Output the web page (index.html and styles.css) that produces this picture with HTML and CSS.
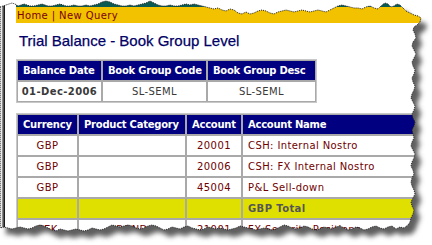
FILE: index.html
```
<!DOCTYPE html>
<html>
<head>
<meta charset="utf-8">
<link rel="stylesheet" href="styles.css">
</head>
<body>
<div class="page">
  <div class="edge"></div>
  <div class="sheet">
    <div class="topstrip"></div>
    <nav class="navbar"><span>Home</span> | <span>New Query</span></nav>
    <h1 class="title">Trial Balance - Book Group Level</h1>
    <table class="grid info">
      <tr><th class="w-date">Balance Date</th><th class="w-code">Book Group Code</th><th class="w-desc">Book Group Desc</th></tr>
      <tr class="plain"><td class="center bold">01-Dec-2006</td><td class="center">SL-SEML</td><td class="center">SL-SEML</td></tr>
    </table>
    <table class="grid accounts">
      <tr><th class="w-cur">Currency</th><th class="w-cat">Product Category</th><th class="w-acc">Account</th><th class="w-name">Account Name</th></tr>
      <tr><td class="center">GBP</td><td></td><td class="center">20001</td><td>CSH: Internal Nostro</td></tr>
      <tr><td class="center">GBP</td><td></td><td class="center">20006</td><td>CSH: FX Internal Nostro</td></tr>
      <tr><td class="center">GBP</td><td></td><td class="center">45004</td><td>P&amp;L Sell-down</td></tr>
      <tr class="total"><td></td><td></td><td></td><td class="bold">GBP Total</td></tr>
      <tr><td class="center">SEK</td><td class="center">BOND</td><td class="center">21001</td><td>FX Security Positions</td></tr>
    </table>
  </div>
  <svg class="tear" width="432" height="245" viewBox="0 0 432 245">
    <defs>
      <path id="paper" d="M0,7 L3,6 L6,5 L9,4 L12,3 L15,4 L18,6 L21,5 L24,4 L27,5 L30,6 L34,6 L38,5 L42,4 L45,5 L48,6 L52,6 L56,5 L60,4 L63,5 L66,6 L70,6 L74,5 L78,6 L82,6 L86,5 L90,6 L94,5 L98,4 L102,2 L106,1 L110,2 L114,4 L118,5 L122,6 L126,6 L130,5 L134,6 L138,5 L142,4 L146,3 L150,1 L154,3 L158,5 L162,6 L166,6 L170,5 L174,6 L178,6 L182,5 L186,4 L190,5 L194,4 L198,5 L202,6 L206,7 L210,8 L214,9 L218,8 L222,10 L226,11 L230,9 L234,10 L238,13 L242,14 L246,12 L250,14 L254,13 L258,11 L262,10 L266,11 L270,13 L274,14 L278,12 L282,11 L286,10 L290,11 L294,12 L298,11 L302,10 L306,11 L310,12 L314,11 L318,10 L322,11 L326,12 L330,10 L334,8 L338,6 L342,5 L346,6 L350,7 L354,8 L358,8 L362,9 L366,7 L370,6 L374,8 L378,9 L382,5 L385,3 L388,4 L391,7 L394,6 L397,4 L400,5 L403,8 L406,11 L410,13 L414,15 L418,16 L421,18 L420,22 L417,25 L414,27 L413,30 L415,34 L416,38 L413,42 L412,46 L414,50 L416,54 L414,58 L412,62 L413,66 L415,70 L414,74 L412,78 L413,82 L415,86 L414,90 L412,94 L411,98 L413,102 L415,106 L414,110 L412,114 L413,118 L415,122 L414,126 L412,130 L413,134 L414,138 L412,142 L411,146 L413,150 L415,154 L414,158 L412,162 L411,166 L413,170 L414,174 L412,178 L411,182 L412,186 L414,190 L415,194 L413,198 L411,202 L412,206 L414,210 L413,214 L411,218 L410,222 L408,225 L404,228 L400,227 L396,229 L392,226 L388,227 L384,229 L380,228 L376,226 L372,227 L368,229 L364,230 L360,228 L356,227 L352,229 L348,230 L344,228 L340,226 L336,227 L332,229 L328,228 L324,227 L320,229 L316,230 L312,229 L308,227 L304,226 L300,228 L296,229 L292,228 L288,226 L284,225 L280,227 L276,229 L272,230 L268,229 L264,228 L260,229 L256,230 L252,229 L248,228 L244,227 L240,226 L236,228 L232,229 L228,230 L224,229 L220,228 L216,229 L212,228 L208,227 L204,229 L200,230 L196,229 L192,228 L188,226 L184,227 L180,229 L176,228 L172,227 L168,229 L164,230 L160,228 L156,226 L152,225 L148,226 L144,228 L140,229 L136,228 L132,226 L128,225 L124,226 L120,227 L116,226 L112,225 L108,227 L104,229 L100,230 L96,229 L92,228 L88,230 L84,231 L80,230 L76,229 L72,230 L68,231 L64,230 L60,229 L56,231 L52,230 L48,228 L44,226 L40,225 L36,226 L32,228 L28,229 L24,228 L20,227 L16,228 L12,229 L8,228 L4,227 L0,228 Z"/>
      <filter id="soft" x="-10%" y="-10%" width="120%" height="120%"><feGaussianBlur stdDeviation="2.5"/></filter>
      <mask id="outside" maskUnits="userSpaceOnUse" x="0" y="0" width="432" height="245">
        <rect width="432" height="245" fill="#fff"/>
        <use href="#paper" fill="#000"/>
      </mask>
    </defs>
    <g mask="url(#outside)">
      <rect width="432" height="245" fill="#fff"/>
      <use href="#paper" transform="translate(6 7)" fill="#5e5e5e" filter="url(#soft)"/>
    </g>
    <use href="#paper" fill="none" stroke="#222" stroke-width="1" stroke-dasharray="1 1"/>
  </svg>
</div>
</body>
</html>
```
FILE: styles.css
```
html, body {
  margin: 0;
  padding: 0;
  background: #fff;
}
.page {
  position: relative;
  width: 432px;
  height: 245px;
  overflow: hidden;
  display: flex;
}
.edge {
  width: 5px;
  flex: none;
  background: linear-gradient(to right, #cfcfcf 0 1px, #ececec 1px 2px, #8c8c8c 2px 3px, #555 3px 4px, #1a1a1a 4px 5px);
}
.sheet {
  flex: 1;
  padding-left: 11px;
  font-family: "DejaVu Sans", Verdana, sans-serif;
}
.topstrip {
  height: 7px;
  background: #0d5a52;
}
.navbar {
  height: 14px;
  padding: 2px 0 0 1px;
  background: #f2c200;
  color: #7a0000;
  font-size: 10px;
  line-height: 14px;
  letter-spacing: 0.4px;
  white-space: nowrap;
}
.title {
  margin: 9px 0 9px 3px;
  font-family: "Liberation Sans", Arial, sans-serif;
  font-size: 15px;
  line-height: 18px;
  font-weight: normal;
  color: #000066;
  white-space: nowrap;
  -webkit-text-stroke: 0.25px #000066;
}
.grid {
  box-sizing: border-box;
  table-layout: fixed;
  border-collapse: separate;
  border-spacing: 0;
  border: 1px solid #c8c8c8;
  font-family: "DejaVu Sans", Verdana, sans-serif;
  font-size: 10px;
  line-height: 13px;
}
.grid th, .grid td {
  box-sizing: border-box;
  border: 1px solid #a9a9a9;
  padding: 3px 2px 3px 5px;
  height: 21px;
  white-space: nowrap;
  overflow: visible;
  text-align: left;
  color: #700000;
  letter-spacing: 0.4px;
}
.grid th {
  background: #000080;
  color: #fff;
  font-weight: bold;
  letter-spacing: -0.25px;
}
.info {
  width: 301px;
}
.info td {
  color: #3a3a3a;
}
.accounts {
  width: 405px;
  margin-top: 10px;
}
.center { text-align: center !important; padding-left: 2px !important; }
.bold { font-weight: bold; }
.w-date { width: 85px; }
.w-code { width: 105px; }
.w-desc { width: 109px; }
.w-cur { width: 61px; }
.w-cat { width: 108px; }
.w-acc { width: 56px; }
.w-name { width: 178px; }
.total td {
  background: #e0e000;
  color: #555;
}
.tear {
  position: absolute;
  left: 0;
  top: 0;
  pointer-events: none;
}
```
